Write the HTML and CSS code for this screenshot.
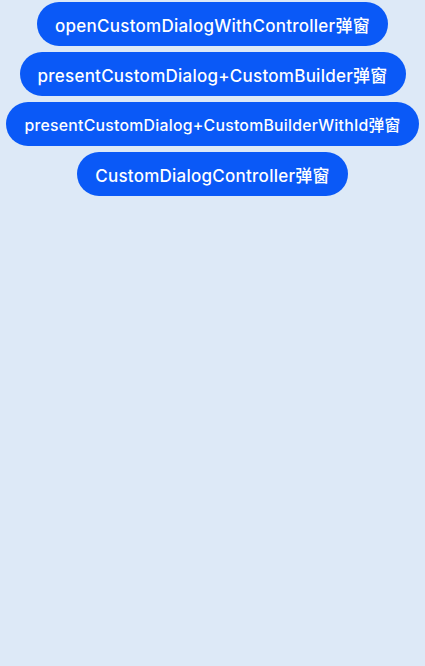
FILE: index.html
```html
<html lang="en">
  <head>
    <meta charset="UTF-8" />
    <meta name="viewport" content="width=device-width, initial-scale=1.0" />
    <title>Dialog</title>
    <link rel="stylesheet" href="styles.css">
  </head>

  <body>
    <div class="list">
      <button class="btn">openCustomDialogWithController弹窗</button>
      <button class="btn">presentCustomDialog+CustomBuilder弹窗</button>
      <button class="btn small">presentCustomDialog+CustomBuilderWithId弹窗</button>
      <button class="btn">CustomDialogController弹窗</button>
    </div>
  </body>
</html>
```

FILE: styles.css
```css
html,
body {
  margin: 0;
  height: 100%;
  background-color: #dde9f7;
}

.list {
  display: flex;
  flex-direction: column;
  align-items: center;
  gap: 6px;
  padding-top: 2px;
}

.btn {
  height: 44px;
  padding: 0 18px;
  border: none;
  border-radius: 22px;
  background-color: #0a59f7;
  color: #ffffff;
  font-family: Inter, "Noto Sans CJK SC", sans-serif;
  font-size: 17px;
  font-weight: 500;
  letter-spacing: 0.25px;
  white-space: nowrap;
}

.btn.small {
  font-size: 15.8px;
}
```
